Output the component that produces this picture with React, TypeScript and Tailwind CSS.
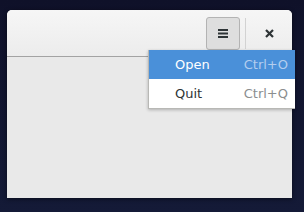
const App = () => {
  return (
    <div
      className="relative w-[304px] h-[212px] overflow-hidden bg-gradient-to-b from-[#0f1129] to-[#141a37] pl-[7px] pt-[10px]"
      style={{ fontFamily: '"DejaVu Sans", "Noto Sans", sans-serif' }}
    >
      {/* window */}
      <div className="w-[285px] h-[188px] flex flex-col rounded-t-[5px] overflow-hidden bg-[#e9e9e9] shadow-[0_1px_4px_rgba(0,0,0,0.5)]">
        <div className="h-[47px] flex items-center justify-end border-b border-[#a3a3a3] bg-gradient-to-b from-[#f6f6f6] to-[#ececec]">
          <div className="w-[34px] h-[33px] flex items-center justify-center rounded-[3px] border border-[#b3b3b3] bg-[#dedede]">
            <svg width="10" height="10" viewBox="0 0 10 10">
              <rect x="0" y="1" width="10" height="2" fill="#2e3436" />
              <rect x="0" y="4.5" width="10" height="2" fill="#2e3436" />
              <rect x="0" y="8" width="10" height="2" fill="#2e3436" />
            </svg>
          </div>
          <div className="w-px h-[31px] ml-[5px] bg-[#d2d2d2]" />
          <div className="w-[46px] h-[33px] flex items-center justify-center">
            <svg width="9" height="9" viewBox="0 0 9 9">
              <path d="M1 1 L8 8 M8 1 L1 8" stroke="#2e3436" strokeWidth="2.2" />
            </svg>
          </div>
        </div>
        <div className="flex-1" />
      </div>

      {/* popover menu */}
      <div className="absolute left-[148px] top-[50px] w-[147px] flex flex-col bg-white border-l border-b border-[#b8b8b5] shadow-[0_1px_3px_rgba(0,0,0,0.25)] text-[13px]">
        <div className="h-[29px] flex items-center justify-between pl-[26px] pr-[7px] bg-[#4a90d9]">
          <span className="text-white">Open</span>
          <span className="text-[#b3cdee]">Ctrl+O</span>
        </div>
        <div className="h-[29px] flex items-center justify-between pl-[26px] pr-[7px]">
          <span className="text-[#2e3436]">Quit</span>
          <span className="text-[#8b8e8f]">Ctrl+Q</span>
        </div>
      </div>
    </div>
  );
};

export default App;
